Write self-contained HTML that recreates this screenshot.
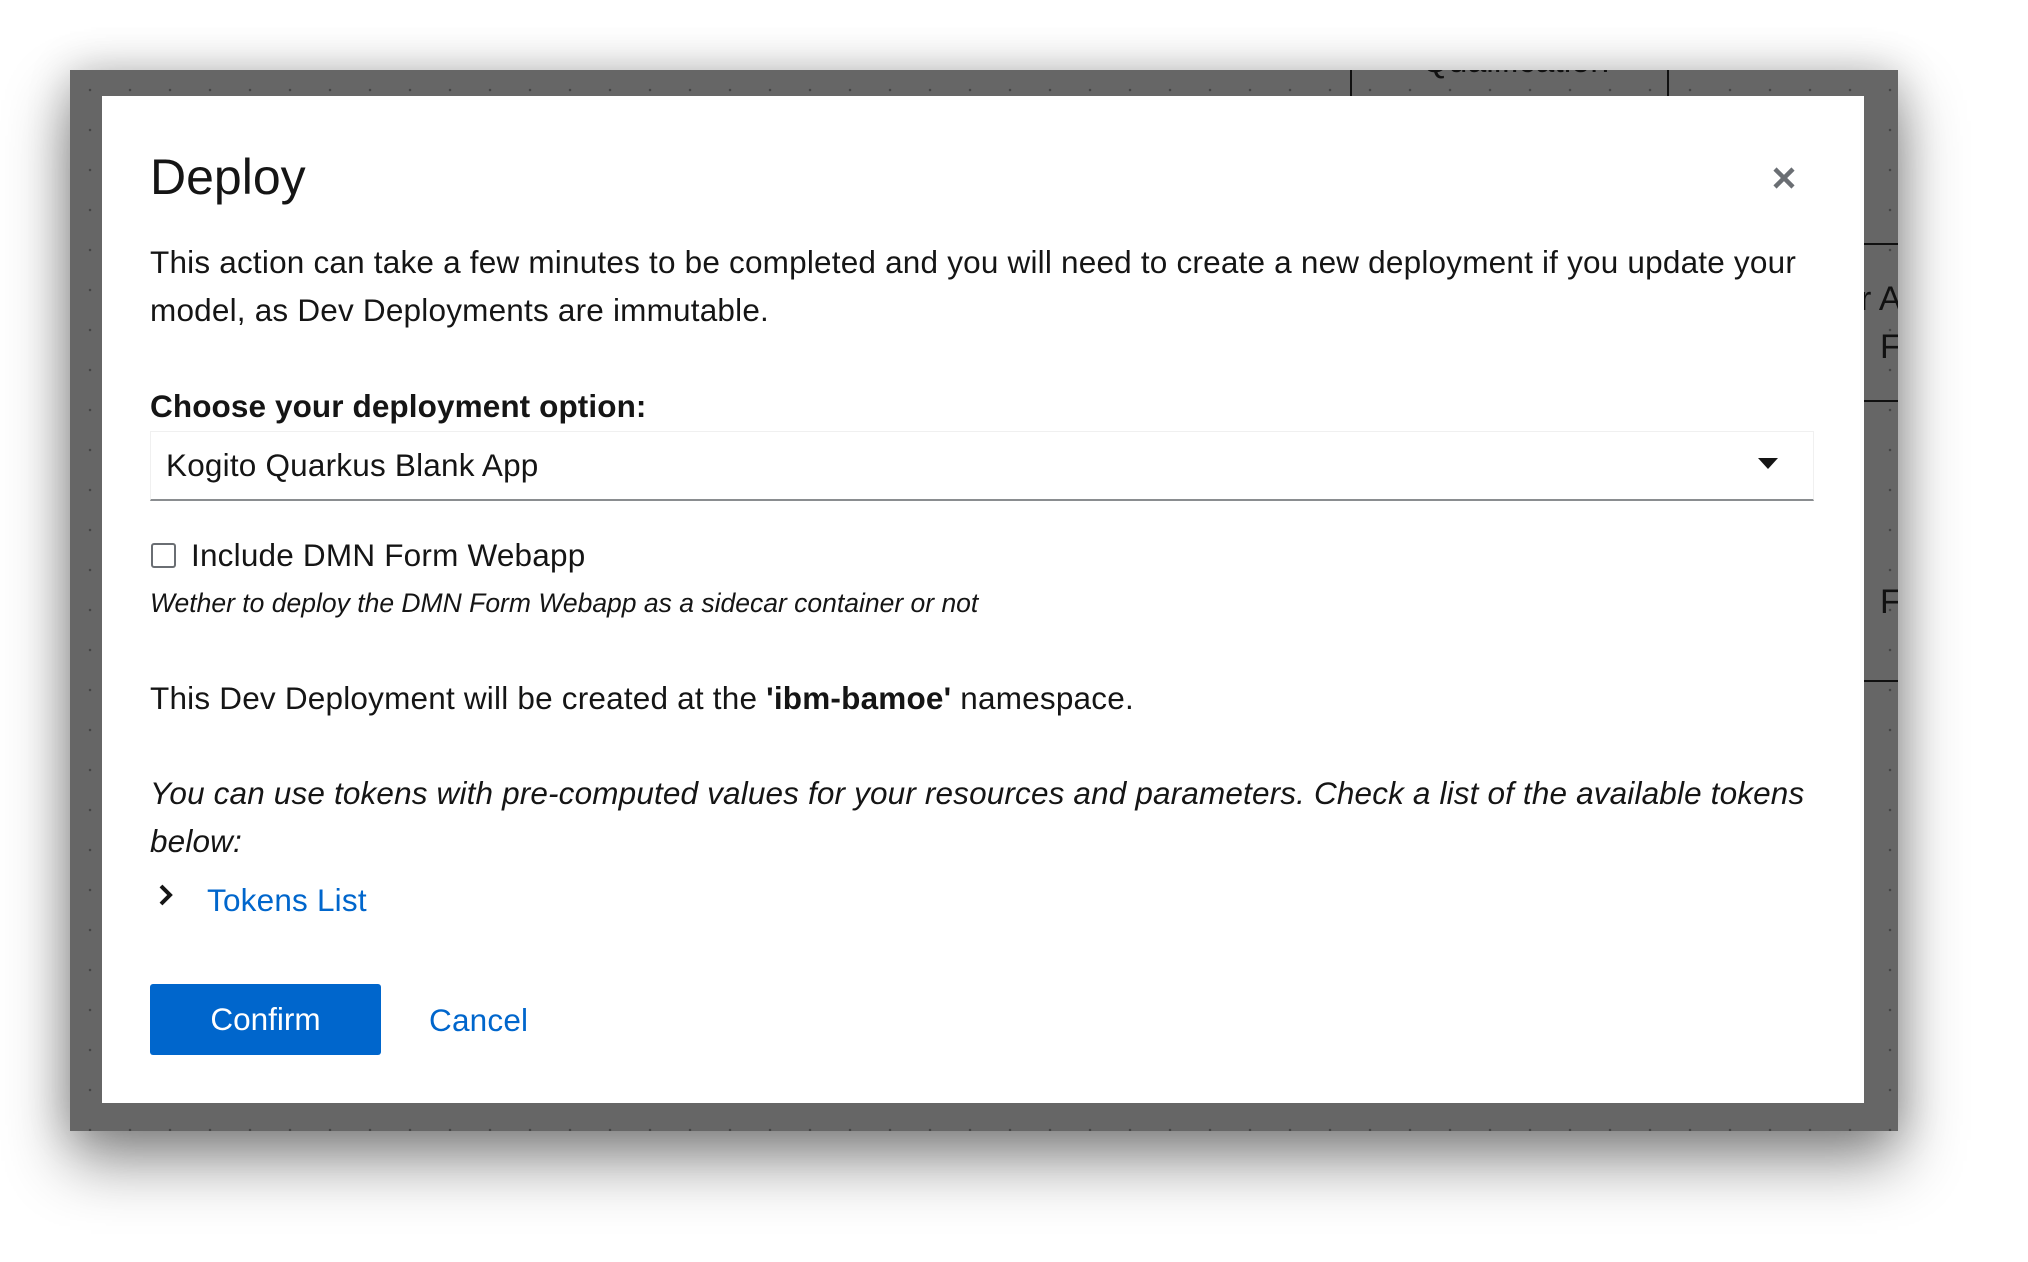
<!DOCTYPE html>
<html><head><meta charset="utf-8"><style>
html,body{margin:0;padding:0;width:2028px;height:1262px;overflow:hidden;background:#fff;font-family:"Liberation Sans",sans-serif;}
.frame{position:absolute;left:70px;top:70px;width:1828px;height:1061px;background-color:#666;
background-image:radial-gradient(circle,#444 1px,transparent 1.5px);background-size:40px 40px;
box-shadow:0 30px 60px rgba(0,0,0,.45),0 0 40px rgba(0,0,0,.2);overflow:hidden;}
.ln{position:absolute;background:#111;}
.modal{position:absolute;left:102px;top:96px;width:1762px;height:1007px;background:#fff;}
.t{position:absolute;white-space:nowrap;color:#151515;}
.b{font-size:31.5px;letter-spacing:0.2px;}
</style></head><body>
<div class="frame">
<div class="ln" style="left:1280px;top:0;width:2px;height:26px"></div>
<div class="ln" style="left:1597px;top:0;width:2px;height:26px"></div>
<div class="ln" style="left:1794px;top:173px;width:34px;height:2px"></div>
<div class="ln" style="left:1794px;top:330px;width:34px;height:2px"></div>
<div class="ln" style="left:1794px;top:610px;width:34px;height:2px"></div>
<div class="t" style="left:1790px;top:210px;font-size:34px;color:#111">r A</div>
<div class="t" style="left:1810px;top:258px;font-size:34px;color:#111">F</div>
<div class="t" style="left:1810px;top:513px;font-size:34px;color:#111">F</div>
<div class="t" style="left:1352px;top:-28px;font-size:34px;color:#111">Qualification</div>
</div>
<div class="modal">
<div class="t" style="left:48px;top:52px;font-size:50px;">Deploy</div>
<svg style="position:absolute;left:1670px;top:70px" width="24" height="24" viewBox="0 0 24 24"><path d="M3 3L21 21M21 3L3 21" stroke="#6a6e73" stroke-width="4.5"/></svg>
<div class="t b" style="left:48px;top:142px;line-height:48px;">This action can take a few minutes to be completed and you will need to create a new deployment if you update your<br>model, as Dev Deployments are immutable.</div>
<div class="t b" style="left:48px;top:292px;font-weight:bold;letter-spacing:0.1px">Choose your deployment option:</div>
<div style="position:absolute;left:48px;top:335px;width:1662px;height:67px;border:1px solid #f0f0f0;border-bottom:2px solid #8a8d90;"></div>
<div class="t b" style="left:64px;top:351px;">Kogito Quarkus Blank App</div>
<svg style="position:absolute;left:1656px;top:362px" width="20" height="12"><path d="M0 0H20L10 11Z" fill="#151515"/></svg>
<div style="position:absolute;left:49px;top:447px;width:21px;height:21px;border:2px solid #6a6e73;border-radius:3px;"></div>
<div class="t b" style="left:89px;top:441px;">Include DMN Form Webapp</div>
<div class="t" style="left:48px;top:492px;font-size:26.5px;font-style:italic;">Wether to deploy the DMN Form Webapp as a sidecar container or not</div>
<div class="t b" style="left:48px;top:584px;">This Dev Deployment will be created at the <b>'ibm-bamoe'</b> namespace.</div>
<div class="t b" style="left:48px;top:673px;line-height:48px;font-style:italic;letter-spacing:0.15px">You can use tokens with pre-computed values for your resources and parameters. Check a list of the available tokens<br>below:</div>
<svg style="position:absolute;left:56px;top:788px" width="16" height="22"><path d="M3 2L12 11L3 20" stroke="#151515" stroke-width="4" fill="none"/></svg>
<div class="t b" style="left:105px;top:786px;color:#0066cc;">Tokens List</div>
<div style="position:absolute;left:48px;top:888px;width:231px;height:71px;background:#0066cc;border-radius:3px;color:#fff;font-size:31.5px;text-align:center;line-height:71px;">Confirm</div>
<div class="t b" style="left:327px;top:906px;color:#0066cc;">Cancel</div>
</div>
</body></html>
